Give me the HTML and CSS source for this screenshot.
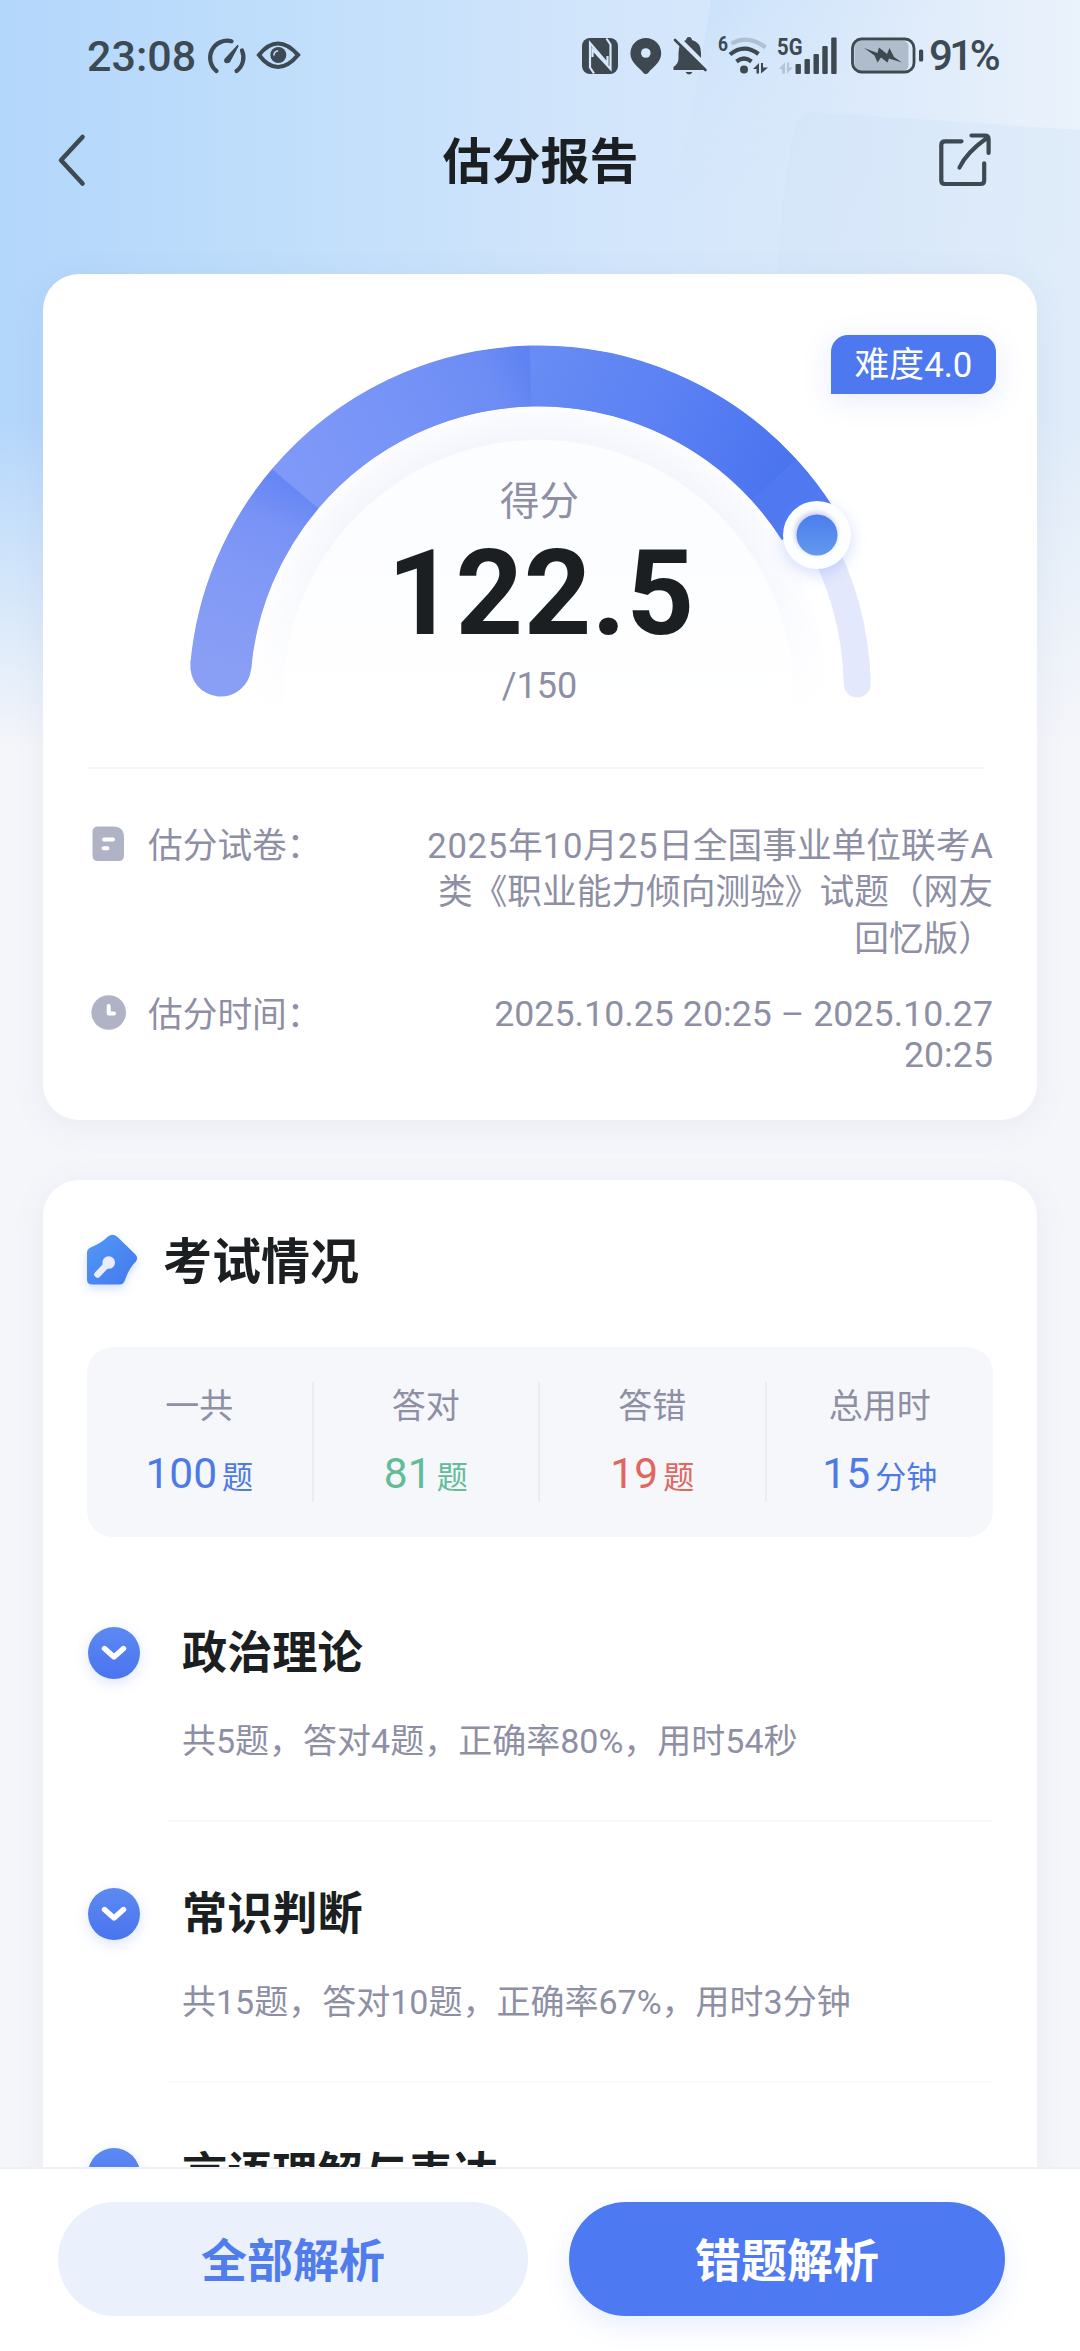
FILE: index.html
```html
<!DOCTYPE html>
<html lang="zh-CN">
<head>
<meta charset="utf-8">
<title>估分报告</title>
<link rel="stylesheet" href="styles.css">
</head>
<body>
<div class="screen">
  <svg class="backdrop" viewBox="0 0 1080 760" preserveAspectRatio="none" aria-hidden="true">
    <defs>
      <linearGradient id="sky" x1="0" y1="0" x2="1080" y2="0" gradientUnits="userSpaceOnUse">
        <stop offset="0" stop-color="#b3d6fb"/><stop offset=".25" stop-color="#bfdefb"/><stop offset=".5" stop-color="#cfe4fb"/><stop offset=".8" stop-color="#dceafb"/><stop offset="1" stop-color="#eaf2fb"/>
      </linearGradient>
      <linearGradient id="facet" x1="700" y1="0" x2="830" y2="120" gradientUnits="userSpaceOnUse">
        <stop offset="0" stop-color="#c6dffa" stop-opacity=".7"/><stop offset="1" stop-color="#d6e8fb" stop-opacity="0"/>
      </linearGradient>
      <linearGradient id="facet-fade" x1="0" y1="0" x2="0" y2="200" gradientUnits="userSpaceOnUse">
        <stop offset=".2" stop-color="#fff"/><stop offset="1" stop-color="#000"/>
      </linearGradient>
      <mask id="facet-mask"><rect width="1080" height="274" fill="url(#facet-fade)"/></mask>
      <linearGradient id="tile" x1="780" y1="110" x2="1080" y2="260" gradientUnits="userSpaceOnUse">
        <stop offset="0" stop-color="#d1e4f8" stop-opacity=".5"/><stop offset="1" stop-color="#d9e8f8" stop-opacity=".6"/>
      </linearGradient>
      <linearGradient id="fade" x1="0" y1="420" x2="0" y2="750" gradientUnits="userSpaceOnUse">
        <stop offset="0" stop-color="#f5f6fa" stop-opacity="0"/><stop offset="1" stop-color="#f5f6fa"/>
      </linearGradient>
    </defs>
    <rect width="1080" height="760" fill="url(#sky)"/>
    <path d="M711 0H1080V274H655Q690 140 711 0Z" fill="url(#facet)" mask="url(#facet-mask)"/>
    <path d="M1080 130L815 112Q798 111 794 128Q781 200 777 274V760H1080Z" fill="url(#tile)"/>
    <rect width="1080" height="760" fill="url(#fade)"/>
  </svg>

  <header class="statusbar">
    <div class="status-left">
      <span class="clock">23:08</span>
      <svg width="94" height="40" viewBox="207 37 94 40" fill="none" stroke="#3d4953" stroke-width="4.200" stroke-linecap="round">
        <path d="M216.500 72A17 17 0 0 1 231.500 42.300M242 51.500A17 17 0 0 1 236.500 72"/>
        <path d="M225 60.500L238 46.500L229.500 62.500Q226.500 64.500 225 62.500Z" fill="#3d4953" stroke-width="1.600"/>
        <path d="M259 56Q268 44.500 278 44.500T298 56Q288 68 278 68T259 56Z" stroke-width="4.200"/>
        <circle cx="278.300" cy="56" r="8" fill="#3d4953" stroke="none"/>
        <path d="M274 56a4.300 4.300 0 0 1 3.600-4" stroke="#bcdcf8" stroke-width="1.600"/>
      </svg>
    </div>
    <div class="status-right">
      <svg width="344" height="44" viewBox="580 34 344 44" fill="#3d4850">
        <rect x="582" y="38" width="36" height="36" rx="8"/>
        <path d="M594 73.500L590 67.500V43L607.500 63.500V56M606.500 38.500L610.500 44.500V69L592.500 49.500V57" fill="none" stroke="#d6e8fb" stroke-width="2.200"/>
        <path d="M645.800 38a15.400 15.400 0 0 1 15.400 15.400c0 9-9 14-12.600 19q-2.800 3.200-5.600 0c-3.600-5-12.600-10-12.600-19A15.400 15.400 0 0 1 645.800 38Z"/>
        <circle cx="645.800" cy="53" r="4.800" fill="#d6e8fb"/>
        <path d="M689 37q2.600 0 3 3 9 2.500 9 13v8l5 9H673.500V67q5-3 5-9V53q0-10.500 7.500-13 .5-3 3-3ZM685.500 72H692.500q-3.500 5-7 0Z"/>
        <path d="M677 38L709 70" stroke="#d8e8fb" stroke-width="6"/>
        <path d="M675 40L705.500 70" stroke="#3d4850" stroke-width="2.600" stroke-linecap="round"/>
        <text class="tiny-six" x="718" y="51" textLength="10" lengthAdjust="spacingAndGlyphs">6</text>
        <g fill="none" stroke="#3d4850" stroke-width="4.200">
          <path d="M731.500 43.500Q748 34 765.500 47.500" stroke="#adc1d3"/>
          <path d="M730 54.500Q744 43 758.500 54"/>
          <path d="M736.500 61.500Q744 55.500 751.500 61.500"/>
        </g>
        <circle cx="744" cy="69.500" r="4"/>
        <path d="M753 69L759 63V73.500H756.500V69ZM761 63H763V67.500H768L761 73.500Z"/>
        <text class="tiny-5g" x="777" y="54.500" textLength="25.500" lengthAdjust="spacingAndGlyphs">5G</text>
        <path d="M778.500 69L785 62.500V73.500H782V69ZM787 62.500H789V67.500H793L787 73.500Z" fill="#b4c4d3"/>
        <rect x="795.500" y="64" width="5.400" height="10" rx="1"/><rect x="804.500" y="59" width="5.400" height="15" rx="1"/><rect x="813.500" y="54" width="5.400" height="20" rx="1"/><rect x="822.300" y="46" width="5.400" height="28" rx="1"/><rect x="831.200" y="37.500" width="5.400" height="36.500" rx="1"/>
        <rect x="854.500" y="41" width="54" height="29.500" rx="5" fill="#afbccb"/>
        <rect x="852.500" y="39" width="61.500" height="33" rx="9" fill="none" stroke="#3d4850" stroke-width="2.800"/>
        <path d="M864 48L877.500 53L879 47.500L887 54L889.500 48L894 57L902 62.500L889 58.500L887.500 62.500L881 57.500L877.500 62.500L874.500 55.500Z"/>
        <rect x="919" y="49.500" width="4.200" height="12" rx="1.500"/>
      </svg>
      <span class="battery-text">91%</span>
    </div>
  </header>

  <nav class="navbar">
    <svg width="32" height="56" viewBox="56 132 32 56" fill="none" stroke="#3d4a53" stroke-width="4.600" stroke-linecap="round" stroke-linejoin="round"><path d="M82.500 137L61 160.300L82.500 183.500"/></svg>
    <h1>估分报告</h1>
    <svg width="56" height="56" viewBox="937 132 56 56" fill="none" stroke="#3d4a53" stroke-width="4.200" stroke-linecap="round" stroke-linejoin="round"><path d="M961.500 141.300H945Q941.300 141.300 941.300 145V180.500Q941.300 184 945 184H980.500Q984.200 184 984.200 180.500V163.300M959.500 167.500Q966 153 987.500 137.500M971.500 135.500H985Q988.600 135.500 988.600 139V153"/></svg>
  </nav>

  <main class="content">
    <section class="card score-card">
      <span class="badge">难度4.0</span>
      <div class="gauge">
        <svg class="dial" width="800" height="440" viewBox="139 314 800 440">
          <defs>
            <radialGradient id="ring" cx="539.500" cy="695" r="288" gradientUnits="userSpaceOnUse">
              <stop offset="0" stop-color="#fcfdff"/><stop offset=".883" stop-color="#fcfdff"/><stop offset=".888" stop-color="#f4f6fd"/><stop offset=".96" stop-color="#f9fafe"/><stop offset="1" stop-color="#fdfdff"/>
            </radialGradient>
            <linearGradient id="dim" x1="0" y1="520" x2="0" y2="715" gradientUnits="userSpaceOnUse"><stop offset="0" stop-color="#fff" stop-opacity="0"/><stop offset="1" stop-color="#fff"/></linearGradient>
            <linearGradient id="s1" gradientUnits="userSpaceOnUse" x1="221.800" y1="666" x2="296" y2="489"><stop offset="0" stop-color="#899ef5"/><stop offset=".5" stop-color="#8199f6"/><stop offset=".8" stop-color="#7892f6"/><stop offset="1" stop-color="#6687f5"/></linearGradient>
            <linearGradient id="s2" gradientUnits="userSpaceOnUse" x1="296" y1="489" x2="532" y2="376"><stop offset="0" stop-color="#7f99f7"/><stop offset=".5" stop-color="#7693f7"/><stop offset=".85" stop-color="#6d8df4"/><stop offset="1" stop-color="#5f83f2"/></linearGradient>
            <linearGradient id="s3" gradientUnits="userSpaceOnUse" x1="532" y1="376" x2="775" y2="480"><stop offset="0" stop-color="#678cf3"/><stop offset=".5" stop-color="#5b81f4"/><stop offset="1" stop-color="#4b74ef"/></linearGradient>
            <linearGradient id="knob" x1="0" y1="0" x2="0" y2="1"><stop offset="0" stop-color="#4b7eed"/><stop offset="1" stop-color="#6399ee"/></linearGradient>
            <filter id="soft" x="-60%" y="-60%" width="220%" height="220%"><feGaussianBlur stdDeviation="8"/></filter>
            <filter id="rim" x="-30%" y="-30%" width="160%" height="160%"><feGaussianBlur stdDeviation="2"/></filter>
          </defs>
          <path d="M251.500 735V695A288 288 0 0 1 827.500 695V735Z" fill="url(#ring)"/>
          <rect x="240" y="515" width="600" height="225" fill="url(#dim)"/>
          <g fill="none">
            <path d="M818 536A319 319 0 0 1 858.300 684" stroke="#e4e8fc" stroke-width="27" stroke-linecap="round"/>
            <path d="M221.800 666.100A319 319 0 0 1 808.500 523.600" stroke="#6687f4" stroke-width="60"/>
            <path d="M221.800 666.100L221.900 665" stroke="#899ef5" stroke-width="61" stroke-linecap="round"/>
            <path d="M221.800 666.100A319 319 0 0 1 296.200 488.700" stroke="url(#s1)" stroke-width="61"/>
            <path d="M296.200 488.700A319 319 0 0 1 531.700 376.100" stroke="url(#s2)" stroke-width="61"/>
            <path d="M531.700 376.100A319 319 0 0 1 775.400 480.300" stroke="url(#s3)" stroke-width="61"/>
            <path d="M775.400 480.300A319 319 0 0 1 808.500 523.600" stroke="#5079f1" stroke-width="61"/>
          </g>
          <circle cx="818" cy="540" r="34" fill="#6d8ff5" opacity=".3" filter="url(#soft)"/>
          <circle cx="818" cy="535" r="34" fill="#fdfeff"/>
          <circle cx="817" cy="533" r="21.500" fill="#b9bff2" opacity=".7" filter="url(#rim)"/>
          <circle cx="818" cy="535" r="20.500" fill="url(#knob)"/>
        </svg>
        <div class="score">
          <span class="score-label">得分</span>
          <strong class="score-value">122.5</strong>
          <span class="score-total">/150</span>
        </div>
      </div>
      <dl class="facts">
        <div class="fact">
          <svg width="36" height="36" viewBox="0 0 36 36"><path d="M7 .5H22Q33 .5 33 11.500V29.500Q33 35 27.500 35H7Q1.500 35 1.500 29.500V6Q1.500 .5 7 .5Z" fill="#b0b2c6"/><path d="M13 13.500H22M12.500 22.300H16.500" stroke="#fff" stroke-width="4" stroke-linecap="round"/></svg>
          <dt>估分试卷：</dt>
          <dd class="paper"><span class="num">2025</span>年<span class="num">10</span>月<span class="num">25</span>日全国事业单位联考A<br>类《职业能力倾向测验》试题（网友<br>回忆版）</dd>
        </div>
        <div class="fact">
          <svg width="36" height="36" viewBox="0 0 36 36"><circle cx="17.700" cy="17.500" r="17.300" fill="#b0b2c6"/><path d="M17.700 11V18.500H23" fill="none" stroke="#fff" stroke-width="4" stroke-linecap="round" stroke-linejoin="round"/></svg>
          <dt>估分时间：</dt>
          <dd class="time">2025.10.25 20:25 – 2025.10.27<br>20:25</dd>
        </div>
      </dl>
    </section>

    <section class="card exam-card">
      <h2>
        <svg class="exam-icon" width="52" height="52" viewBox="0 0 52 52">
          <defs><linearGradient id="nib" x1="0" y1="0" x2="1" y2="1"><stop offset="0" stop-color="#529af5"/><stop offset="1" stop-color="#4377ee"/></linearGradient></defs>
          <path d="M22 2.500Q26.500 -.8 31 2.500L49.500 20.500Q52.500 24 50 27.500Q43 34 39 46Q37.500 50.500 33.500 50.500H6Q1 50.500 1 45.500V19Q1 15 4.500 13.500Q15.500 9 22 2.500Z" fill="url(#nib)"/>
          <circle cx="22.700" cy="28.500" r="6.300" fill="#e9edfc"/><path d="M20 31.500L11.500 40.500" stroke="#e9edfc" stroke-width="6.500" stroke-linecap="round"/>
        </svg>
        <span>考试情况</span>
      </h2>
      <div class="stats">
        <div class="stat"><span class="stat-label">一共</span><span class="stat-value blue">100<small>题</small></span></div>
        <div class="stat"><span class="stat-label">答对</span><span class="stat-value green">81<small>题</small></span></div>
        <div class="stat"><span class="stat-label">答错</span><span class="stat-value red">19<small>题</small></span></div>
        <div class="stat"><span class="stat-label">总用时</span><span class="stat-value blue">15<small>分钟</small></span></div>
      </div>
      <ul class="topics">
        <li>
          <span class="toggle"><svg width="26" height="18" viewBox="0 0 26 18"><path d="M3.500 4.500L13 13L22.500 4.500" fill="none" stroke="#fff" stroke-width="5.400" stroke-linecap="round" stroke-linejoin="round"/></svg></span>
          <div class="topic"><h3>政治理论</h3><p>共5题，答对4题，正确率80%，用时54秒</p></div>
        </li>
        <li>
          <span class="toggle"><svg width="26" height="18" viewBox="0 0 26 18"><path d="M3.500 4.500L13 13L22.500 4.500" fill="none" stroke="#fff" stroke-width="5.400" stroke-linecap="round" stroke-linejoin="round"/></svg></span>
          <div class="topic"><h3>常识判断</h3><p>共15题，答对10题，正确率67%，用时3分钟</p></div>
        </li>
        <li>
          <span class="toggle"></span>
          <div class="topic"><h3>言语理解与表达</h3></div>
        </li>
      </ul>
    </section>
  </main>

  <footer class="actions">
    <button class="btn btn-light">全部解析</button>
    <button class="btn btn-solid">错题解析</button>
  </footer>
</div>
</body>
</html>
```
FILE: styles.css
```css
* { box-sizing: border-box; margin: 0; padding: 0; }
body { font-family: Roboto, "Noto Sans CJK SC", sans-serif; background: #f5f6fa; color: #1b1f21; }
svg { display: block; flex: none; overflow: visible; }
.screen { position: relative; width: 1080px; height: 2351px; overflow: hidden; display: flex; flex-direction: column; }
.backdrop { position: absolute; left: 0; top: 0; width: 1080px; height: 760px; z-index: -1; }

.statusbar { height: 112px; padding: 0 76px 0 87px; display: flex; justify-content: space-between; align-items: center; color: #3d4953; font-size: 43px; font-weight: 500; }
.status-left, .status-right { display: flex; align-items: center; }
.clock { width: 120px; line-height: 50px; }
.battery-text { width: 75px; margin-left: 5px; line-height: 50px; font-size: 42px; letter-spacing: -3.500px; white-space: nowrap; }
.tiny-six { font: 700 20px Roboto, sans-serif; }
.tiny-5g { font: 700 24px Roboto, sans-serif; }

.navbar { height: 96px; padding: 0 87px 0 56px; display: flex; align-items: center; justify-content: space-between; }
.navbar h1 { font-size: 49px; line-height: 72px; font-weight: 700; margin-left: 56px; padding-top: 5px; }

.content { flex: 1; min-height: 0; overflow: hidden; padding: 66px 43px 0; display: flex; flex-direction: column; gap: 60px; }
.card { flex: none; background: #fff; border-radius: 36px; box-shadow: 0 6px 36px rgba(90, 105, 150, .07); }
.score-card { position: relative; height: 846px; padding: 40px 44px 0; }
.badge { position: absolute; top: 61px; right: 41px; width: 165px; height: 59px; border-radius: 17px 17px 17px 0; background: #4d78ef; color: #fff; font-size: 34.800px; line-height: 61px; text-align: center; box-shadow: 0 6px 30px rgba(77, 120, 239, .14); }
.gauge { height: 455px; display: grid; grid-template-columns: 800px; justify-content: center; border-bottom: 2px solid #f5f6f9; margin: 0 8px 0 1px; padding-left: 2px; }
.dial, .score { grid-area: 1 / 1; }
.score { display: flex; flex-direction: column; align-items: center; color: #8e8fa4; padding: 158px 0 0 4px; }
.score-label { font-size: 39.500px; line-height: 60px; }
.score-value { font-size: 118px; line-height: 120px; color: #1b1f21; letter-spacing: .5px; font-weight: 700; margin: 2px 0 0 3px; }
.score-total { font-size: 36px; line-height: 50px; margin-top: 7px; }

.facts { padding-top: 53px; color: #8e8fa4; font-size: 34.700px; }
.fact { display: flex; margin-left: 4px; }
.fact + .fact { margin-top: 29px; }
.fact svg { margin: 4px 0 0 0; }
.fact dt { line-height: 46.300px; margin-left: 21px; padding-top: 1px; white-space: nowrap; }
.fact dd { flex: 1; text-align: right; white-space: nowrap; }
.paper { line-height: 46.300px; padding-top: 1px; }
.num { letter-spacing: .7px; }
.time { line-height: 41px; padding-top: 3px; font-size: 35.700px; letter-spacing: .05px; }

.exam-card { height: 1200px; padding: 44px 44px 0; }
.exam-card h2 { display: flex; align-items: center; gap: 25px; height: 72px; font-size: 49px; line-height: 72px; font-weight: 700; }
.exam-card h2 span { padding-top: 5px; }
.exam-icon { margin: 0 0 0 -1px; filter: drop-shadow(0 4px 5px rgba(70, 130, 250, .25)); }
.stats { margin-top: 51px; height: 190px; border-radius: 26px; background: #f5f7fb; display: grid; grid-template-columns: repeat(4, 1fr); align-items: center; }
.stat { height: 120px; display: flex; flex-direction: column; align-items: center; justify-content: space-between; border-right: 2px solid #eaecf2; }
.stat:last-child { border-right: 0; }
.stat-label { font-size: 34px; line-height: 48px; color: #8e8fa4; }
.stat-value { font-size: 42.500px; line-height: 49px; }
.stat-value small { font-size: 31px; margin-left: 5px; }
.blue { color: #4e7ae6; }
.green { color: #62bc98; }
.red { color: #e2665f; }

.topics { list-style: none; padding-top: 78px; }
.topics li { display: flex; gap: 27px; height: 260.600px; }
.toggle { flex: none; width: 52px; height: 52px; margin: 12px 0 0 1px; border-radius: 50%; background: linear-gradient(#5c8af2, #4a74ef); box-shadow: 0 4px 14px rgba(77, 120, 239, .2); display: flex; align-items: center; justify-content: center; }
.topic { flex: 1; height: 207px; padding-left: 15px; border-bottom: 2px solid #f8f9fb; }
.topic h3 { font-size: 45.200px; line-height: 72px; font-weight: 700; padding-top: 3px; }
.topic p { font-size: 34px; line-height: 50px; margin-top: 26px; color: #8e8fa4; white-space: nowrap; }

.actions { position: relative; height: 184px; padding: 33px 75px 0 58px; background: #fff; border-top: 2px solid #eef0f3; display: flex; gap: 41px; }
.btn { height: 114px; padding-bottom: 4px; border: 0; border-radius: 57px; font: 700 46px Roboto, "Noto Sans CJK SC", sans-serif; }
.btn-light { width: 470px; background: #ebf0fd; color: #517cec; }
.btn-solid { width: 436px; background: #4d7af2; color: #fff; box-shadow: 0 10px 26px rgba(77, 122, 242, .13); }
```
